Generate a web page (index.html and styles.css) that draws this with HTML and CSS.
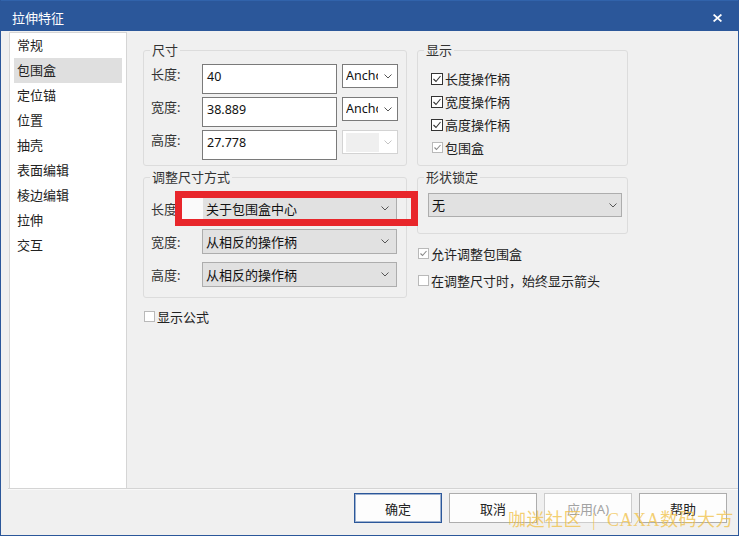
FILE: index.html
```html
<!DOCTYPE html>
<html>
<head>
    <meta charset="utf-8">
    <link rel="stylesheet" href="styles.css">
</head>
<body>
    <div class="window">
        <div class="titlebar">
            <span class="title">拉伸特征</span>
            <svg class="close" width="9" height="8" viewBox="0 0 9 8"><path d="M0.6 0.5 L8.4 7.5 M8.4 0.5 L0.6 7.5"/></svg>
        </div>

        <div class="main">
            <ul class="nav">
                <li>常规</li>
                <li class="active">包围盒</li>
                <li>定位锚</li>
                <li>位置</li>
                <li>抽壳</li>
                <li>表面编辑</li>
                <li>棱边编辑</li>
                <li>拉伸</li>
                <li>交互</li>
            </ul>

            <div class="panel">
                <div class="row row-top">
                    <fieldset class="group size">
                        <legend>尺寸</legend>
                        <div class="field">
                            <span class="lbl">长度:</span>
                            <div class="input">40</div>
                            <div class="combo small"><span class="combo-text">Anchor</span><svg class="chev" width="8" height="5" viewBox="0 0 8 5"><polyline points="0.5,0.5 4,4 7.5,0.5"/></svg></div>
                        </div>
                        <div class="field">
                            <span class="lbl">宽度:</span>
                            <div class="input">38.889</div>
                            <div class="combo small"><span class="combo-text">Anchor</span><svg class="chev" width="8" height="5" viewBox="0 0 8 5"><polyline points="0.5,0.5 4,4 7.5,0.5"/></svg></div>
                        </div>
                        <div class="field">
                            <span class="lbl">高度:</span>
                            <div class="input">27.778</div>
                            <div class="combo small disabled"><span class="ghost"></span><svg class="chev" width="8" height="5" viewBox="0 0 8 5"><polyline points="0.5,0.5 4,4 7.5,0.5"/></svg></div>
                        </div>
                    </fieldset>

                    <fieldset class="group display">
                        <legend>显示</legend>
                        <div class="check"><span class="cb"><svg width="10" height="10" viewBox="0 0 10 10"><polyline points="1.5,5 4,7.5 8.5,2"/></svg></span>长度操作柄</div>
                        <div class="check"><span class="cb"><svg width="10" height="10" viewBox="0 0 10 10"><polyline points="1.5,5 4,7.5 8.5,2"/></svg></span>宽度操作柄</div>
                        <div class="check"><span class="cb"><svg width="10" height="10" viewBox="0 0 10 10"><polyline points="1.5,5 4,7.5 8.5,2"/></svg></span>高度操作柄</div>
                        <div class="check"><span class="cb dis"><svg width="9" height="9" viewBox="0 0 9 9"><polyline points="1.5,4.5 3.5,6.5 7.5,2"/></svg></span>包围盒</div>
                    </fieldset>
                </div>

                <div class="row row-mid">
                    <fieldset class="group resize">
                        <legend>调整尺寸方式</legend>
                        <div class="field">
                            <span class="lbl">长度:</span>
                            <div class="combo"><span class="combo-text">关于包围盒中心</span><svg class="chev" width="8" height="5" viewBox="0 0 8 5"><polyline points="0.5,0.5 4,4 7.5,0.5"/></svg></div>
                        </div>
                        <div class="field">
                            <span class="lbl">宽度:</span>
                            <div class="combo"><span class="combo-text">从相反的操作柄</span><svg class="chev" width="8" height="5" viewBox="0 0 8 5"><polyline points="0.5,0.5 4,4 7.5,0.5"/></svg></div>
                        </div>
                        <div class="field">
                            <span class="lbl">高度:</span>
                            <div class="combo"><span class="combo-text">从相反的操作柄</span><svg class="chev" width="8" height="5" viewBox="0 0 8 5"><polyline points="0.5,0.5 4,4 7.5,0.5"/></svg></div>
                        </div>
                    </fieldset>

                    <div class="side">
                        <fieldset class="group lock">
                            <legend>形状锁定</legend>
                            <div class="combo"><span class="combo-text">无</span><svg class="chev" width="8" height="5" viewBox="0 0 8 5"><polyline points="0.5,0.5 4,4 7.5,0.5"/></svg></div>
                        </fieldset>
                        <div class="check"><span class="cb dis"><svg width="9" height="9" viewBox="0 0 9 9"><polyline points="1.5,4.5 3.5,6.5 7.5,2"/></svg></span>允许调整包围盒</div>
                        <div class="check"><span class="cb dis off"></span>在调整尺寸时，始终显示箭头</div>
                    </div>
                </div>

                <div class="check formula"><span class="cb dis off"></span>显示公式</div>
            </div>
        </div>

        <div class="footer">
            <div class="btn default">确定</div>
            <div class="btn">取消</div>
            <div class="btn disabled">应用(A)</div>
            <div class="btn">帮助</div>
        </div>

        <!-- annotation + watermark over the dialog -->
        <div class="mark"></div>
        <div class="watermark">咖迷社区<span class="sep">|</span>CAXA数码大方</div>
    </div>
</body>
</html>
```

FILE: styles.css
```css
* {
    box-sizing: border-box;
    margin: 0;
    padding: 0;
}

body {
    font-family: "Noto Sans", "Noto Sans CJK SC", sans-serif;
    font-size: 13px;
    color: #222;
    background-color: #f0f0f0;
}

.window {
    position: relative;
    width: 739px;
    height: 536px;
    border: 1px solid #2b579a;
    border-top: none;
    background-color: #f0f0f0;
    overflow: hidden;
}

/* title bar */
.titlebar {
    height: 31px;
    background-color: #2b579a;
    border-top: 1px solid #3163ab;
    color: #fff;
    display: flex;
    align-items: center;
    justify-content: space-between;
    padding: 3px 16px 0 11px;
    line-height: 16px;
}

.close path {
    stroke: #fff;
    stroke-width: 1.7;
    fill: none;
}

/* body */
.main {
    display: flex;
    height: 457px;
    padding: 1px 0 0 8px;
}

.nav {
    width: 118px;
    background-color: #fff;
    border: 1px solid #d5d5d5;
    border-bottom: none;
    list-style: none;
}

.nav li {
    height: 25px;
    line-height: 25px;
    margin: 0 4px;
    padding-left: 3px;
    color: #222;
}

.nav li.active {
    background-color: #dfdfdf;
}

.panel {
    flex: 1;
    padding: 10px 0 0 16px;
}

.row {
    display: flex;
    gap: 10px;
}

.row-mid {
    margin-top: 3px;
    align-items: flex-start;
}

.group {
    border: 1px solid #dcdcdc;
    border-radius: 3px;
    margin: 0;
    min-width: 0;
}

.group legend {
    padding: 0 2px;
    line-height: 16px;
    color: #333;
}

.size {
    width: 264px;
    padding: 6px 8px 4px 6px;
}

.display {
    width: 211px;
    padding: 9px 6px 6px 6px;
}

.resize {
    width: 264px;
    padding: 11px 8px 10px 6px;
}

.lock {
    width: 211px;
    padding: 8px 5px 16px 6px;
}

.field {
    display: flex;
    align-items: flex-start;
    height: 30px;
}

.field + .field {
    margin-top: 3px;
}

.lbl {
    width: 52px;
    padding-left: 1px;
    line-height: 20px;
    color: #333;
}

.input {
    width: 135px;
    height: 30px;
    border: 1px solid #7a7a7a;
    background-color: #fff;
    padding: 2px 0 0 4px;
    line-height: 20px;
    font-size: 12.5px;
    color: #111;
}

.combo {
    display: flex;
    align-items: center;
    height: 25px;
    border: 1px solid #adadad;
    background-color: #e1e1e1;
    padding: 0 7px 0 3px;
    color: #111;
}

.combo-text {
    white-space: nowrap;
    overflow: hidden;
    line-height: 18px;
}

.chev {
    margin-left: auto;
    flex-shrink: 0;
}

.chev polyline {
    fill: none;
    stroke: #555;
    stroke-width: 1;
}

.combo.small {
    width: 56px;
    height: 24px;
    margin-left: 5px;
    background-color: #fff;
    border-color: #7a7a7a;
    padding-right: 5px;
}

.combo.small .combo-text {
    width: 32px;
    font-size: 12.5px;
}

.combo.small.disabled {
    border-color: #d3d3d3;
}

.ghost {
    width: 33px;
    height: 19px;
    background-color: #efefef;
}

.combo.small.disabled .chev polyline {
    stroke: #c4c4c4;
}

.resize .field {
    height: 25px;
    align-items: center;
}

.resize .field + .field {
    margin-top: 8px;
}

.resize .combo {
    width: 195px;
}

.lock .combo {
    width: 194px;
    height: 24px;
    margin-left: 4px;
    padding-right: 4px;
}

/* checkboxes */
.check {
    display: flex;
    align-items: center;
    height: 23px;
    color: #222;
    white-space: nowrap;
}

.display .check {
    margin-left: 7px;
}

.cb {
    width: 12px;
    height: 12px;
    border: 1px solid #333;
    background-color: #fff;
    margin-right: 2px;
    display: flex;
    align-items: center;
    justify-content: center;
    flex-shrink: 0;
}

.cb polyline {
    fill: none;
    stroke: #333;
    stroke-width: 1.1;
}

.cb.dis {
    width: 11px;
    height: 11px;
    border-color: #b9b9b9;
    margin-left: 1px;
}

.cb.dis polyline {
    stroke: #8a8a8a;
}

.side .check {
    height: 27px;
}

.side .lock + .check {
    margin-top: 6px;
}

.check.formula {
    height: 24px;
    margin-top: 6px;
}

/* bottom buttons */
.footer {
    height: 47px;
    margin-left: 7px;
    border-top: 1px solid #d4d4d4;
    box-shadow: inset 0 1px 0 #f9f9f9;
    display: flex;
    justify-content: flex-end;
    gap: 7px;
    padding: 4px 11px 0 0;
}

.btn {
    width: 88px;
    height: 30px;
    border: 1px solid #adadad;
    background-color: #fdfdfd;
    display: flex;
    align-items: center;
    justify-content: center;
    color: #222;
}

.btn.default {
    border-color: #2b579a;
    box-shadow: inset 0 0 0 1px rgba(43, 87, 154, 0.45);
}

.btn.disabled {
    border-color: #cccccc;
    color: #a3a3a3;
}

/* red highlight frame drawn over the first resize row */
.mark {
    position: absolute;
    left: 174px;
    top: 191px;
    width: 243px;
    height: 35px;
    border: 7px solid #e8262b;
    background: linear-gradient(to right, #fafafa 0, #fafafa 21px, transparent 21px);
}

.watermark {
    position: absolute;
    left: 507px;
    top: 510px;
    font-family: "Liberation Serif", "Noto Sans CJK SC", serif;
    font-size: 18px;
    line-height: 20px;
    letter-spacing: 0.5px;
    color: rgba(240, 192, 70, 0.75);
    white-space: nowrap;
}

.watermark .sep {
    margin: 0 11px 0 10px;
}
```
